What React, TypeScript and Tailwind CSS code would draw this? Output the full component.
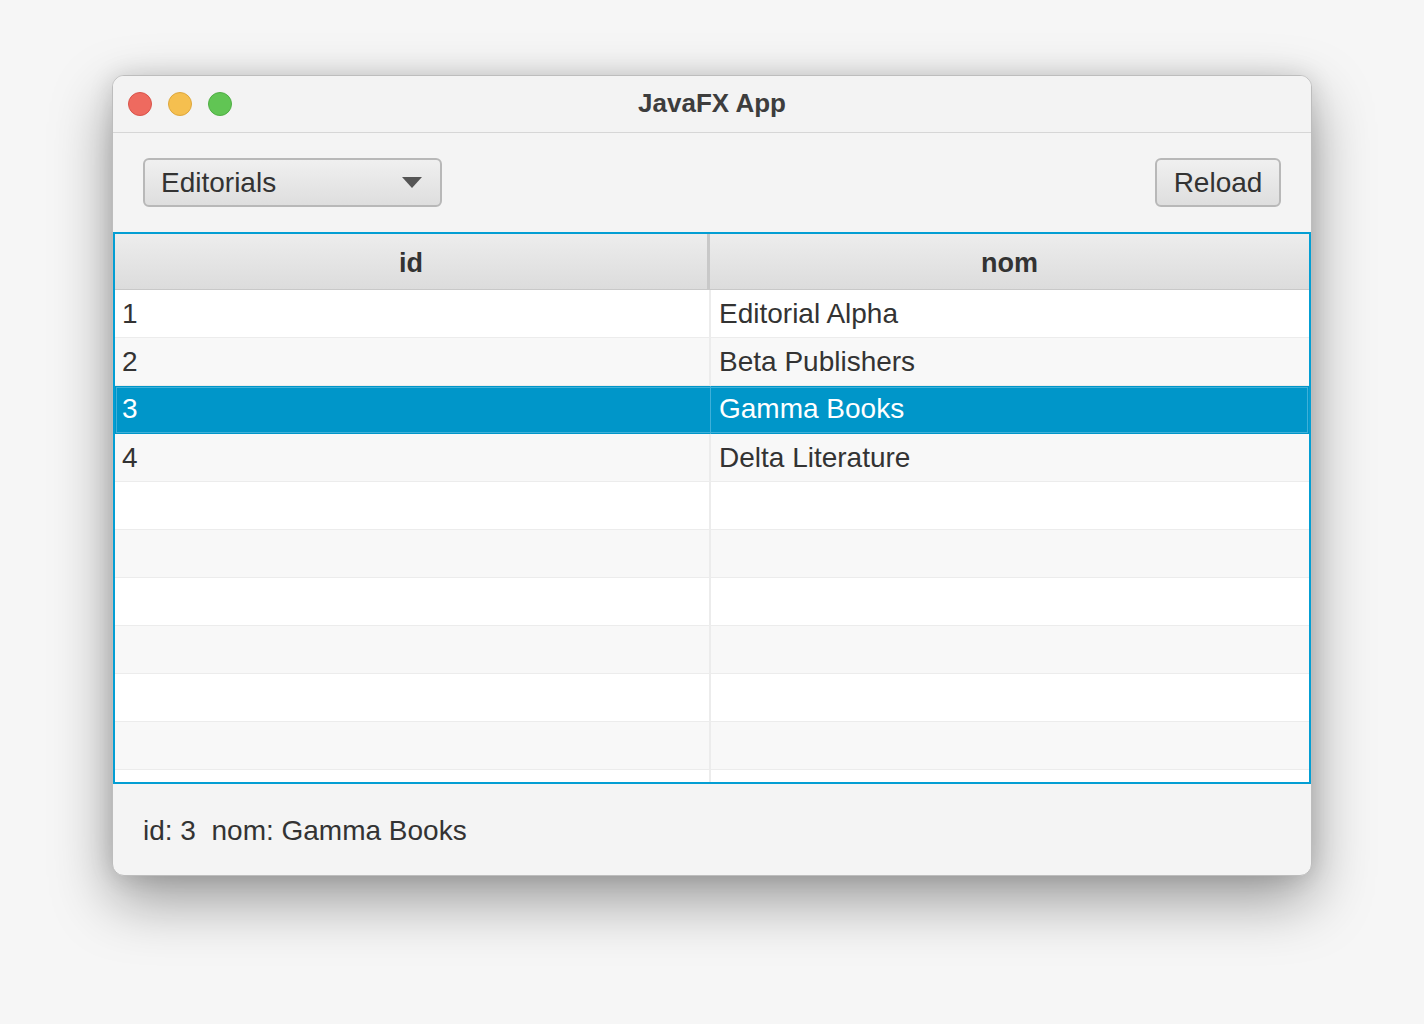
const rows = [
  { id: "1", nom: "Editorial Alpha" },
  { id: "2", nom: "Beta Publishers" },
  { id: "3", nom: "Gamma Books" },
  { id: "4", nom: "Delta Literature" },
  { id: "", nom: "" },
  { id: "", nom: "" },
  { id: "", nom: "" },
  { id: "", nom: "" },
  { id: "", nom: "" },
  { id: "", nom: "" },
  { id: "", nom: "" },
];

function TrafficLights() {
  return (
    <div className="flex items-center gap-[16px]">
      <span className="h-[24px] w-[24px] rounded-full border border-[#d9534a] bg-[#ee6a5f]" />
      <span className="h-[24px] w-[24px] rounded-full border border-[#dea73c] bg-[#f5bf4f]" />
      <span className="h-[24px] w-[24px] rounded-full border border-[#4fae44] bg-[#61c554]" />
    </div>
  );
}

export default function App() {
  const selected = "3";

  return (
    <div
      className="min-h-[1024px] w-[1424px] bg-[#f6f6f6] pl-[112px] pt-[75px] text-[#333333]"
      style={{ fontFamily: '"Liberation Sans", Arial, sans-serif' }}
    >
      <div className="flex h-[801px] w-[1200px] flex-col overflow-hidden rounded-[12px] border border-[#bdbdbd] bg-[#f4f4f4] shadow-[0_24px_60px_rgba(0,0,0,0.38),0_0_24px_rgba(0,0,0,0.12)]">
        {/* title bar */}
        <div className="relative flex h-[57px] shrink-0 items-center border-b border-[#d6d6d6] bg-[#f3f3f3] pl-[15px]">
          <TrafficLights />
          <div className="absolute inset-0 flex items-center justify-center pb-[2px] text-[26px] font-bold text-[#3d3d3d]">
            JavaFX App
          </div>
        </div>

        {/* toolbar */}
        <div className="flex h-[99px] shrink-0 items-start justify-between px-[30px] pt-[25px]">
          <div className="flex h-[49px] w-[299px] items-center justify-between rounded-[6px] border-2 border-[#b8b8b8] bg-gradient-to-b from-[#f0f0f0] to-[#dedede] pl-[16px] pr-[18px]">
            <span className="text-[28px] leading-none">Editorials</span>
            <svg width="20" height="11" viewBox="0 0 20 11">
              <path d="M0 0 H20 L10 11 Z" fill="#555555" />
            </svg>
          </div>
          <div className="flex h-[49px] w-[126px] items-center justify-center rounded-[6px] border-2 border-[#b8b8b8] bg-gradient-to-b from-[#f0f0f0] to-[#dedede]">
            <span className="text-[28px] leading-none">Reload</span>
          </div>
        </div>

        {/* table */}
        <div className="flex h-[552px] shrink-0 flex-col overflow-hidden border-2 border-[#039ed3] bg-white">
          <div className="flex h-[56px] shrink-0 border-b border-[#c8c8c8]">
            <div className="flex w-[595px] items-center justify-center border-r-[3px] border-[#c8c8c8] bg-gradient-to-b from-[#ededed] to-[#dcdcdc] pt-[4px] text-[27px] font-bold">
              id
            </div>
            <div className="flex flex-1 items-center justify-center bg-gradient-to-b from-[#ededed] to-[#dcdcdc] pt-[4px] text-[27px] font-bold">
              nom
            </div>
          </div>
          <div className="flex flex-col">
            {rows.map((r, i) => {
              const isSel = r.id !== "" && r.id === selected;
              return (
                <div
                  key={i}
                  className={
                    isSel
                      ? "flex h-[48px] shrink-0 bg-[#0096c9] text-white outline outline-1 -outline-offset-2 outline-[#3fb0d9]"
                      : i % 2 === 0
                        ? "flex h-[48px] shrink-0 border-b border-[#ececec] bg-white"
                        : "flex h-[48px] shrink-0 border-b border-[#ececec] bg-[#f8f8f8]"
                  }
                >
                  <div
                    className={
                      isSel
                        ? "flex w-[596px] items-center border-r border-[#3fb0d9] pb-[2px] pl-[7px] text-[28px]"
                        : "flex w-[596px] items-center border-r-2 border-[#ececec] pl-[7px] text-[28px]"
                    }
                  >
                    {r.id}
                  </div>
                  <div className={isSel ? "flex flex-1 items-center pb-[2px] pl-[8px] text-[28px]" : "flex flex-1 items-center pl-[8px] text-[28px]"}>{r.nom}</div>
                </div>
              );
            })}
          </div>
        </div>

        {/* status */}
        <div className="flex flex-1 items-center px-[30px] pt-[2px]">
          <span className="whitespace-pre text-[28px]">id: 3  nom: Gamma Books</span>
        </div>
      </div>
    </div>
  );
}
